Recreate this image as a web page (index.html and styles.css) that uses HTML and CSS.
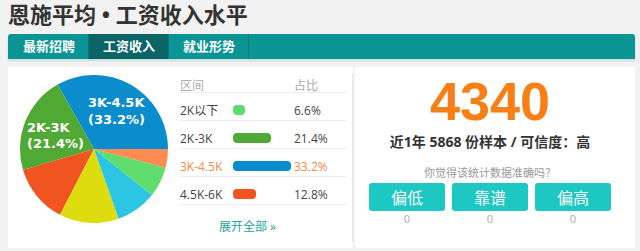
FILE: index.html
```html
<!doctype html>
<html>
  <head>
    <meta charset="utf-8">
    <title>恩施平均工资收入水平</title>
    <link rel="stylesheet" href="styles.css">
  </head>
  <body>
    <h1 class="page-title">恩施平均 • 工资收入水平</h1>

    <nav class="tabs">
      <a class="tab">最新招聘</a>
      <a class="tab active">工资收入</a>
      <a class="tab">就业形势</a>
    </nav>

    <main class="panels">
      <section class="dist">
        <svg class="pie" width="148" height="148" viewBox="0 0 148 148">
          <path fill="#0b8ccc" d="M74 74 L148 74 A74 74 0 0 0 37.54 9.60 Z"/>
          <path fill="#4fa934" d="M74 74 L37.54 9.60 A74 74 0 0 0 3.07 95.09 Z"/>
          <path fill="#ef5421" d="M74 74 L3.07 95.09 A74 74 0 0 0 39.99 139.72 Z"/>
          <path fill="#dcdc0e" d="M74 74 L39.99 139.72 A74 74 0 0 0 98.63 143.78 Z"/>
          <path fill="#2cc6e4" d="M74 74 L98.63 143.78 A74 74 0 0 0 131.91 120.07 Z"/>
          <path fill="#5edc6e" d="M74 74 L131.91 120.07 A74 74 0 0 0 145.56 92.85 Z"/>
          <path fill="#fd8b52" d="M74 74 L145.56 92.85 A74 74 0 0 0 148 74 Z"/>
          <g class="pie-label">
            <text x="68" y="32">3K-4.5K</text>
            <text x="68" y="49">(33.2%)</text>
            <text x="7" y="57">2K-3K</text>
            <text x="7" y="73">(21.4%)</text>
          </g>
        </svg>

        <div class="legend">
          <div class="legend-row legend-head">
            <span>区间</span><span></span><span>占比</span>
          </div>
          <div class="legend-row">
            <span>2K以下</span>
            <span><i class="bar" style="width: 11.5px; background: #5edc6e"></i></span>
            <span>6.6%</span>
          </div>
          <div class="legend-row">
            <span>2K-3K</span>
            <span><i class="bar" style="width: 37.5px; background: #4fa934"></i></span>
            <span>21.4%</span>
          </div>
          <div class="legend-row current">
            <span>3K-4.5K</span>
            <span><i class="bar" style="width: 58px; background: #0b8ccc"></i></span>
            <span>33.2%</span>
          </div>
          <div class="legend-row">
            <span>4.5K-6K</span>
            <span><i class="bar" style="width: 22.5px; background: #ef5421"></i></span>
            <span>12.8%</span>
          </div>
          <a class="expand">展开全部 »</a>
        </div>
      </section>

      <section class="summary">
        <div class="avg">4340</div>
        <p class="sample">近1年 5868 份样本 / 可信度：高</p>
        <p class="question">你觉得该统计数据准确吗？</p>
        <div class="votes">
          <div class="vote"><button>偏低</button><span>0</span></div>
          <div class="vote"><button>靠谱</button><span>0</span></div>
          <div class="vote"><button>偏高</button><span>0</span></div>
        </div>
      </section>
    </main>
  </body>
</html>
```

FILE: styles.css
```css
* {
  box-sizing: border-box;
}

html, body {
  background: #f2f2f2;
  margin: 0;
}

body {
  font-family: "Open Sans", "Noto Sans CJK SC", sans-serif;
  color: #333;
  padding: 0 5px 0 8px;
}

.page-title {
  margin: 0;
  font-size: 22px;
  line-height: 28px;
  font-weight: bold;
  color: #333;
}

.tabs {
  display: flex;
  height: 25px;
  margin-top: 6px;
  background: #0a9494;
  border-radius: 3px 3px 0 0;
  box-shadow: 0 2px 3px rgba(0, 110, 130, 0.18);
}

.tab {
  padding: 0 13px 0 14px;
  line-height: 25px;
  font-size: 13px;
  font-weight: bold;
  color: #fff;
  border-right: 1px solid #087878;
}

.tab:first-child {
  padding-left: 15px;
  border-top-left-radius: 3px;
}

.tab.active {
  background: #0b6466;
}

.panels {
  display: flex;
  gap: 2px;
  height: 181px;
  margin-top: 8px;
}

/* left: pie + legend */
.dist {
  display: flex;
  align-items: flex-start;
  width: 345px;
  background: #fff;
  padding: 8px 0 0 12px;
}

.pie {
  flex: 0 0 auto;
}

.pie-label text {
  font-family: "DejaVu Sans", sans-serif;
  font-size: 13px;
  font-weight: bold;
  fill: #fff;
}

.legend {
  width: 173px;
  height: 168px;
  margin: -1px 0 0 12px;
  padding-right: 5px;
  border-right: 1px solid #e4e4e4;
  font-size: 12px;
}

.legend-row {
  display: grid;
  grid-template-columns: 53px 61px 1fr;
  align-items: center;
  height: 28px;
  padding-top: 7px;
  border-bottom: 1px solid #ededed;
  color: #444;
}

.legend-head {
  height: 19px;
  padding-top: 2px;
  color: #aaa;
}

.legend-row.current {
  color: #f58a4b;
}

.bar {
  display: block;
  height: 10px;
  border-radius: 4px;
}

.expand {
  display: block;
  margin-top: 14px;
  padding-left: 39px;
  line-height: 16px;
  color: #27a19e;
}

/* right: average + vote */
.summary {
  flex: 1;
  background: #fff;
  padding: 5px 24px 0 14px;
  text-align: center;
}

.avg {
  font-family: "Liberation Sans", sans-serif;
  font-size: 54px;
  line-height: 58px;
  font-weight: bold;
  color: #f77f15;
}

.sample {
  margin: 2px 0 0;
  font-size: 14px;
  line-height: 20px;
  font-weight: bold;
  color: #333;
}

.question {
  margin: 13px 0 0;
  font-size: 11px;
  line-height: 16px;
  color: #999;
}

.votes {
  display: flex;
  gap: 7px;
  margin-top: 2px;
}

.vote {
  flex: 1;
  display: flex;
  flex-direction: column;
}

.vote button {
  height: 28px;
  border: 0;
  border-radius: 3px;
  background: #1dc7c2;
  color: #fff;
  font-family: inherit;
  font-size: 16px;
}

.vote span {
  margin-top: 1px;
  font-size: 11px;
  line-height: 14px;
  color: #aaa;
}
```
